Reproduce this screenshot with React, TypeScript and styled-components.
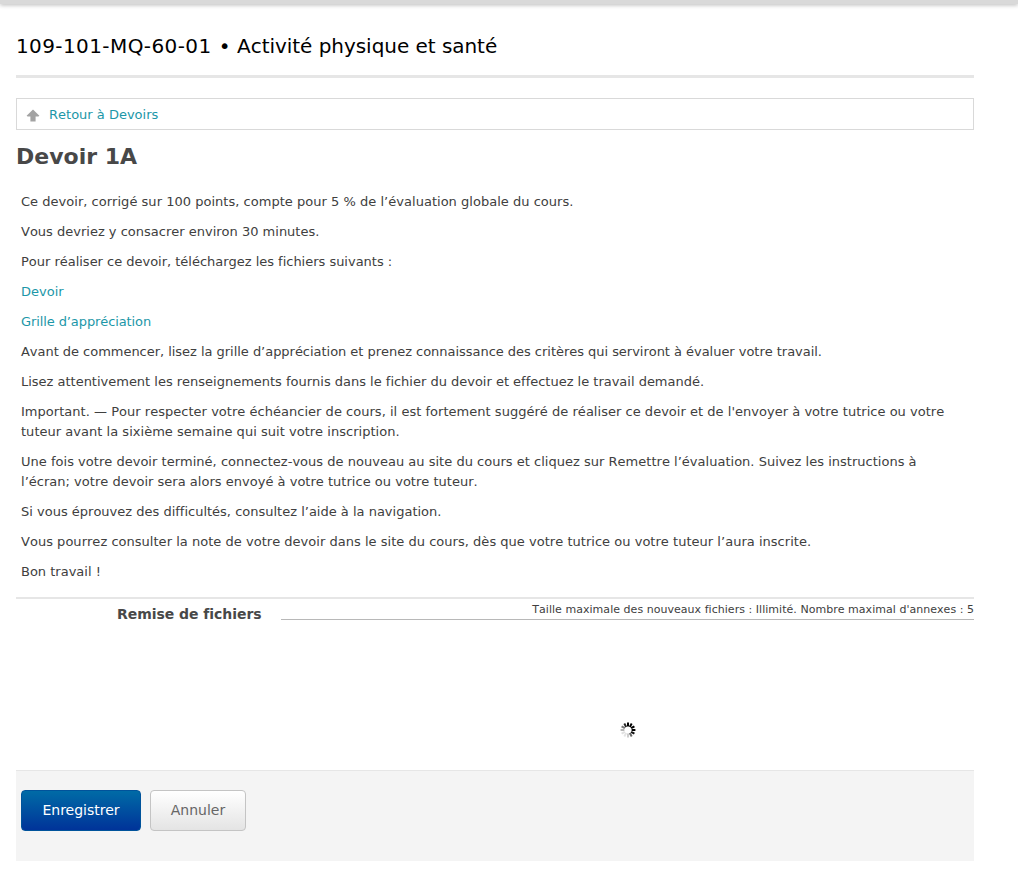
import React from "react";
import styled, { createGlobalStyle } from "styled-components";

const Global = createGlobalStyle`
  html, body { margin: 0; padding: 0; background: #fff; }
  body { font-family: "DejaVu Sans", Verdana, sans-serif; color: #404040; font-size: 13px; text-rendering: optimizeSpeed; font-kerning: none; }
`;

const Page = styled.div`
  height: 881px;
  overflow: hidden;
`;
const TopBar = styled.div`
  height: 4px;
  background: #d9d9d9;
  box-shadow: 0 1px 4px rgba(0, 0, 0, 0.3);
`;
const Main = styled.main`
  width: 958px;
  margin-left: 16px;
`;
const CourseTitle = styled.div`
  height: 74px;
  box-sizing: border-box;
  padding-top: 30px;
  font-size: 20px;
  line-height: 24px;
  color: #000;
  border-bottom: 3px solid #e6e6e6;
`;
const CourseCode = styled.span`
  letter-spacing: 0.4px;
  margin-right: 1px;
`;
const CourseName = styled.span`
  letter-spacing: -0.04px;
`;
const BackBox = styled.div`
  margin-top: 20px;
  height: 32px;
  box-sizing: border-box;
  border: 1px solid #d9d9d9;
  display: flex;
  align-items: center;
  padding-left: 9px;
  gap: 9px;
`;
const Link = styled.a`
  color: #1c97a8;
  text-decoration: none;
`;
const Heading = styled.h1`
  margin: 12px 0 0;
  font-size: 22px;
  line-height: 30px;
  font-weight: 700;
  color: #484848;
`;
const Body = styled.div`
  padding: 20px 15px 0 5px;
  height: 425px;
  box-sizing: border-box;
`;
const Para = styled.p<{ $track?: number }>`
  margin: 0 0 10px;
  line-height: 20px;
  letter-spacing: ${(p) => p.$track ?? 0}px;
`;
const UploadHeader = styled.div`
  border-top: 2px solid #e6e6e6;
  display: flex;
  height: 21px;
`;
const UploadTitle = styled.div`
  width: 265px;
  box-sizing: border-box;
  padding-left: 101px;
  padding-top: 6px;
  font-size: 14px;
  line-height: 18px;
  letter-spacing: -0.05px;
  font-weight: 700;
  color: #484848;
  white-space: nowrap;
`;
const UploadInfo = styled.div`
  flex: 1;
  box-sizing: border-box;
  border-bottom: 1px solid #b8b8b8;
  text-align: right;
  font-size: 11px;
  line-height: 18px;
  padding-top: 2px;
  letter-spacing: 0.035px;
  white-space: nowrap;
`;
const SpinnerArea = styled.div`
  height: 150px;
  display: flex;
  justify-content: center;
  padding-left: 265px;
  padding-top: 102px;
  box-sizing: border-box;
`;
const Footer = styled.div`
  height: 91px;
  box-sizing: border-box;
  background: #f4f4f4;
  border-top: 1px solid #e6e6e6;
  padding: 19px 5px 0;
  display: flex;
  align-items: flex-start;
  gap: 9px;
`;
const Button = styled.button<{ $primary?: boolean }>`
  height: 41px;
  width: ${(p) => (p.$primary ? "120px" : "96px")};
  box-sizing: border-box;
  border-radius: 4px;
  font-family: inherit;
  font-size: 14px;
  padding: 0 0 1px;
  color: ${(p) => (p.$primary ? "#fff" : "#666")};
  border: 1px solid ${(p) => (p.$primary ? "#00539b" : "#c4c4c4")};
  background: ${(p) =>
    p.$primary
      ? "linear-gradient(#006ba6, #003399)"
      : "linear-gradient(#ffffff, #e4e4e4)"};
`;

const UpArrow = () => (
  <svg width="14" height="14" viewBox="0 0 14 14" style={{ marginTop: 4 }}>
    <path d="M7 0.6 L13.4 6.8 L12.4 7.4 H9.6 V12.5 H4.4 V7.4 H1.6 L0.6 6.8 Z" fill="#a3a3a3" />
  </svg>
);

const Spinner = () => {
  const ticks = [0, 30, 60, 90, 120, 150, 180, 210, 240, 270, 300, 330];
  const colors = ["#000", "#000", "#000", "#000", "#111", "#666", "#ccc", "#e4e4e4", "#e0e0e0", "#b5b5b5", "#777", "#222"];
  return (
    <svg width="16" height="16" viewBox="0 0 16 16">
      {ticks.map((a, i) => (
        <line
          key={a}
          x1="8"
          y1="4.4"
          x2="8"
          y2="0.6"
          stroke={colors[i]}
          strokeWidth="2"
          transform={`rotate(${a} 8 8)`}
        />
      ))}
    </svg>
  );
};

const paragraphs: { text: string; link?: boolean; track?: number }[] = [
  { text: "Ce devoir, corrigé sur 100 points, compte pour 5 % de l’évaluation globale du cours.", track: 0.024 },
  { text: "Vous devriez y consacrer environ 30 minutes." },
  { text: "Pour réaliser ce devoir, téléchargez les fichiers suivants :", track: -0.017 },
  { text: "Devoir", link: true },
  { text: "Grille d’appréciation", link: true, track: -0.1 },
  { text: "Avant de commencer, lisez la grille d’appréciation et prenez connaissance des critères qui serviront à évaluer votre travail.", track: -0.032 },
  { text: "Lisez attentivement les renseignements fournis dans le fichier du devoir et effectuez le travail demandé.", track: -0.01 },
  { text: "Important. — Pour respecter votre échéancier de cours, il est fortement suggéré de réaliser ce devoir et de l'envoyer à votre tutrice ou votre tuteur avant la sixième semaine qui suit votre inscription.", track: 0.025 },
  { text: "Une fois votre devoir terminé, connectez-vous de nouveau au site du cours et cliquez sur Remettre l’évaluation. Suivez les instructions à l’écran; votre devoir sera alors envoyé à votre tutrice ou votre tuteur.", track: 0.017 },
  { text: "Si vous éprouvez des difficultés, consultez l’aide à la navigation." },
  { text: "Vous pourrez consulter la note de votre devoir dans le site du cours, dès que votre tutrice ou votre tuteur l’aura inscrite.", track: 0.024 },
  { text: "Bon travail !" },
];

export default function App() {
  return (
    <Page>
      <Global />
      <TopBar />
      <Main>
        <CourseTitle><CourseCode>109-101-MQ-60-01</CourseCode> • <CourseName>Activité physique et santé</CourseName></CourseTitle>
        <BackBox>
          <UpArrow />
          <Link href="#">Retour à Devoirs</Link>
        </BackBox>
        <Heading>Devoir 1A</Heading>
        <Body>
          {paragraphs.map((p) => (
            <Para key={p.text} $track={p.track}>{p.link ? <Link href="#">{p.text}</Link> : p.text}</Para>
          ))}
        </Body>
        <UploadHeader>
          <UploadTitle>Remise de fichiers</UploadTitle>
          <UploadInfo>Taille maximale des nouveaux fichiers : Illimité. Nombre maximal d'annexes : 5</UploadInfo>
        </UploadHeader>
        <SpinnerArea>
          <Spinner />
        </SpinnerArea>
        <Footer>
          <Button $primary>Enregistrer</Button>
          <Button>Annuler</Button>
        </Footer>
      </Main>
    </Page>
  );
}
